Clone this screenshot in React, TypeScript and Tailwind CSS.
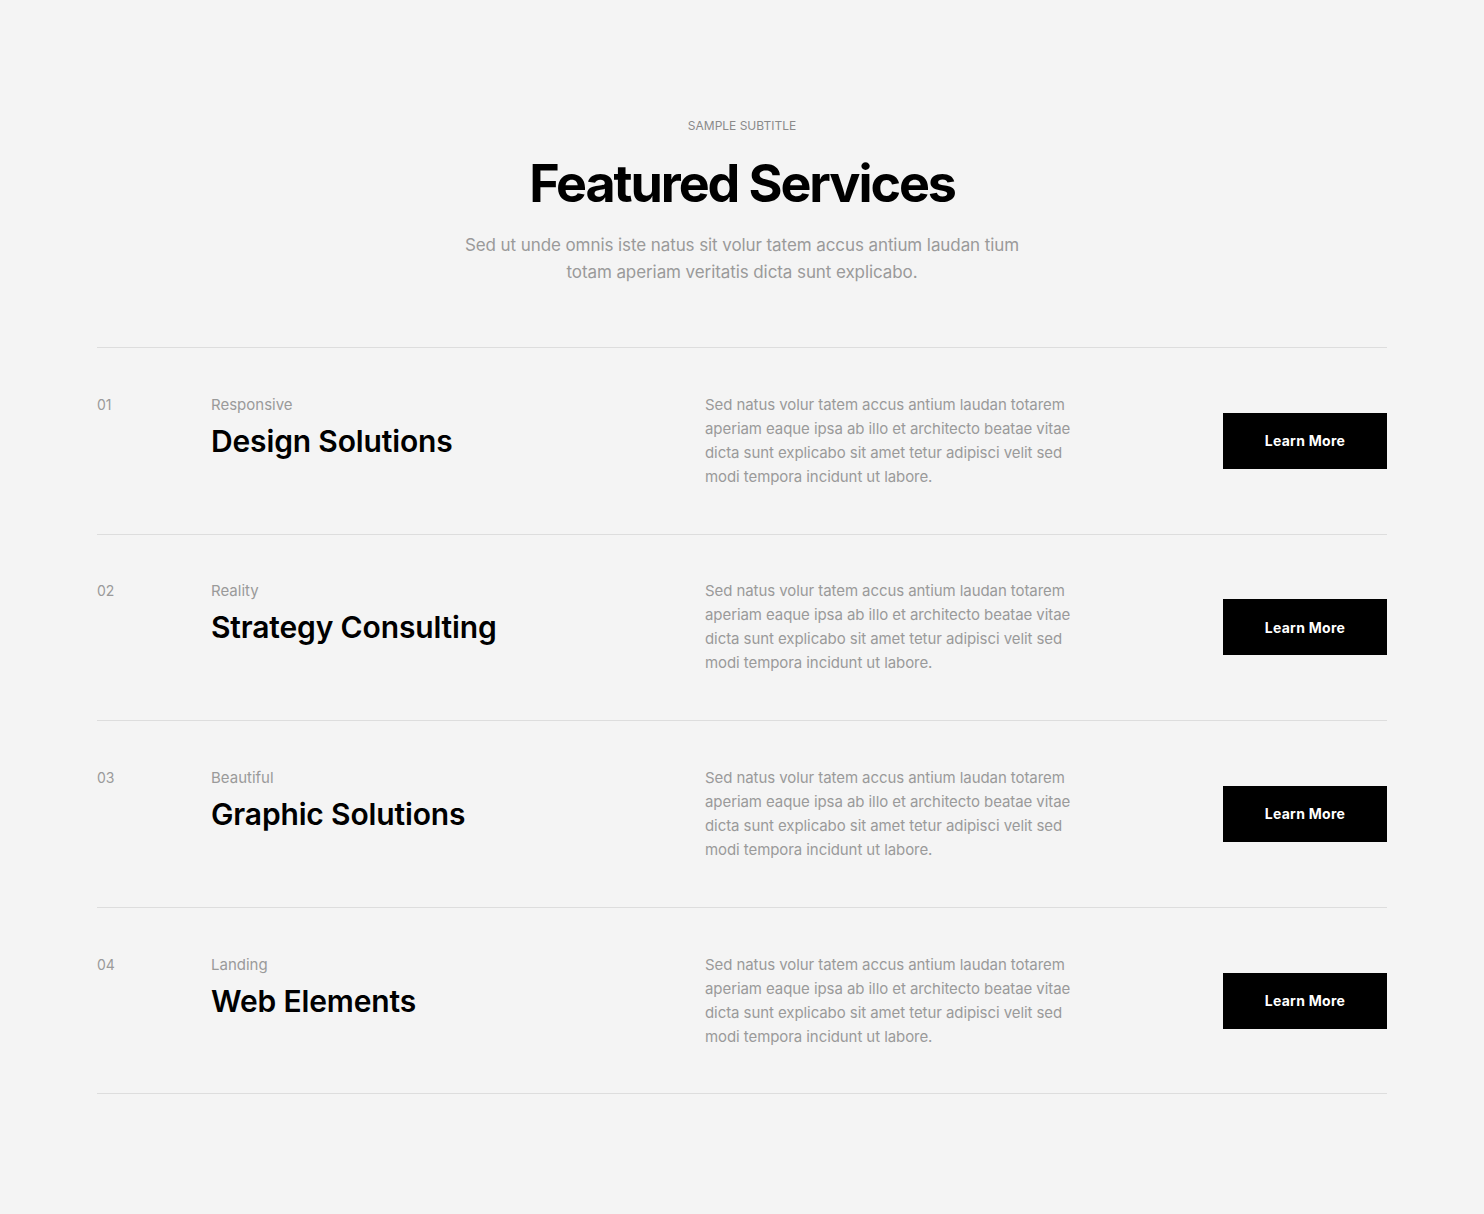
const services = [
  { num: '01', label: 'Responsive', title: 'Design Solutions' },
  { num: '02', label: 'Reality', title: 'Strategy Consulting' },
  { num: '03', label: 'Beautiful', title: 'Graphic Solutions' },
  { num: '04', label: 'Landing', title: 'Web Elements' },
];

export default function App() {
  return (
    <div
      className="min-h-[1214px] bg-[#f4f4f4] pt-[117px] pb-[120px]"
      style={{ fontFamily: 'Inter, "Noto Sans", sans-serif' }}
    >
      <section className="mx-auto w-[1290px]">
        <div className="flex flex-col items-center text-center">
          <div className="text-[12px] leading-[18px] uppercase text-[#8a8a8a]">
            Sample Subtitle
          </div>
          <h2 className="mt-[17px] text-[52px] leading-[64px] font-bold tracking-[-0.04em] text-black">
            Featured Services
          </h2>
          <p className="mt-[16px] w-[570px] text-[17px] leading-[27px] tracking-[-0.005em] text-[#9a9a9a]">
            Sed ut unde omnis iste natus sit volur tatem accus antium laudan tium totam aperiam veritatis dicta sunt explicabo.
          </p>
        </div>

        <div className="mt-[61px] border-t border-[#dddddd]">
          {services.map((s) => (
            <div
              key={s.num}
              className="flex items-center border-b border-[#dddddd] py-[44.8px]"
            >
              <div className="flex w-[608px] self-start">
                <div className="w-[114px] text-[14px] leading-[24px] text-[#9a9a9a]">{s.num}</div>
                <div>
                  <div className="text-[15px] leading-[24px] text-[#9a9a9a]">{s.label}</div>
                  <h3 className="mt-[6px] text-[30px] leading-[36px] font-semibold tracking-[-0.005em] text-black">
                    {s.title}
                  </h3>
                </div>
              </div>
              <p className="w-[380px] text-[15px] leading-[24px] tracking-[-0.005em] text-[#9a9a9a]">
                Sed natus volur tatem accus antium laudan totarem aperiam eaque ipsa ab illo et architecto beatae vitae dicta sunt explicabo sit amet tetur adipisci velit sed modi tempora incidunt ut labore.
              </p>
              <button className="ml-auto h-[56px] w-[164px] bg-black text-[14px] font-bold tracking-[0.02em] text-white">
                Learn More
              </button>
            </div>
          ))}
        </div>
      </section>
    </div>
  );
}
